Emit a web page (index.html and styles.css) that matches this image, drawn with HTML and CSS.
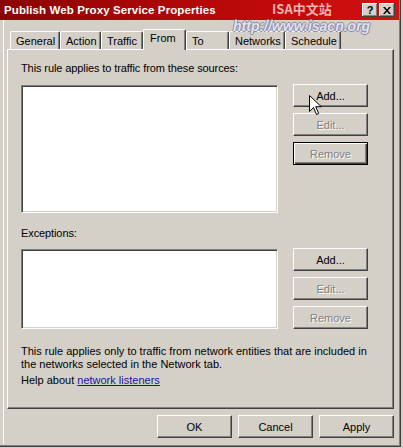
FILE: index.html
```html
<!DOCTYPE html>
<html lang="en">
<head>
    <meta charset="UTF-8">
    <title>Publish Web Proxy Service Properties</title>
    <link rel="stylesheet" href="styles.css">
</head>
<body>
    <div class="window">
        <div class="titlebar">
            <span class="title">Publish Web Proxy Service Properties</span>
            <div class="caption-buttons">
                <span class="cap-btn help">?</span>
                <span class="cap-btn close">
                    <svg width="8" height="7" viewBox="0 0 8 7">
                        <path d="M0 0h2l2 2.5 2-2.5h2l-3 3.5 3 3.5h-2l-2-2.5-2 2.5h-2l3-3.5z" fill="#000"/>
                    </svg>
                </span>
            </div>
        </div>

        <div class="client">
            <div class="tabs">
                <div class="tab w-general">General</div>
                <div class="tab w-action">Action</div>
                <div class="tab w-traffic">Traffic</div>
                <div class="tab w-from active">From</div>
                <div class="tab w-to">To</div>
                <div class="tab w-networks">Networks</div>
                <div class="tab w-schedule">Schedule</div>
            </div>

            <div class="panel">
                <p class="label">This rule applies to traffic from these sources:</p>
                <div class="row">
                    <div class="listbox sources"></div>
                    <div class="btn-col">
                        <button class="btn">Add...</button>
                        <button class="btn" disabled>Edit...</button>
                        <button class="btn focused" disabled>Remove</button>
                    </div>
                </div>

                <p class="label exceptions-label">Exceptions:</p>
                <div class="row">
                    <div class="listbox exceptions"></div>
                    <div class="btn-col">
                        <button class="btn">Add...</button>
                        <button class="btn" disabled>Edit...</button>
                        <button class="btn" disabled>Remove</button>
                    </div>
                </div>

                <p class="note">This rule applies only to traffic from network entities that are included in the networks selected in the Network tab.</p>
                <p class="help-line">Help about <a href="#">network listeners</a></p>
            </div>

            <div class="footer">
                <button class="btn">OK</button>
                <button class="btn">Cancel</button>
                <button class="btn">Apply</button>
            </div>
        </div>

        <div class="stamp-cn">ISA中文站</div>
        <div class="stamp-url">http://www.isacn.org</div>

        <svg class="cursor" width="13" height="21" viewBox="0 0 13 21">
            <path d="M0.5 0.5v16l4-4 3 7 2.2-1-3-6.8h5.6z" fill="#fff" stroke="#000" stroke-width="1"/>
        </svg>
    </div>
</body>
</html>
```

FILE: styles.css
```css
* {
    box-sizing: border-box;
}
body {
    margin: 0;
    background: #d4d0c8;
    font-family: "Liberation Sans", Arial, sans-serif;
    font-size: 11px;
    color: #000;
}
.window {
    position: relative;
    width: 401px;
    height: 447px;
    background: #d4d0c8;
    border-right: 1px solid #404040;
    border-bottom: 1px solid #404040;
    box-shadow: inset -1px -1px 0 #808080;
}
.window::before {
    content: "";
    position: absolute;
    left: 3px;
    top: 20px;
    bottom: 2px;
    width: 1px;
    background: #fff;
}

/* caption */
.titlebar {
    height: 20px;
    margin-right: 1px;
    display: flex;
    align-items: center;
    padding: 0 4px 0 4px;
    background: linear-gradient(to right, #8a0404, #b80808 55%, #d41010);
    color: #fff;
}
.title {
    font-weight: bold;
    font-size: 11.5px;
    letter-spacing: 0.1px;
}
.caption-buttons {
    margin-left: auto;
    display: flex;
    gap: 1px;
}
.cap-btn {
    width: 16px;
    height: 14px;
    display: flex;
    align-items: center;
    justify-content: center;
    background: #d4d0c8;
    box-shadow: inset -1px -1px 0 #404040, inset 1px 1px 0 #fff, inset -2px -2px 0 #808080;
    color: #000;
    font-weight: bold;
    font-size: 11px;
}

/* tabs */
.client {
    padding: 9px 6px 0 7px;
}
.tabs {
    display: flex;
    align-items: flex-end;
    height: 20px;
    padding-left: 3px;
}
.tab {
    position: relative;
    height: 18px;
    padding: 3px 0 0 5px;
    background: #d4d0c8;
    border-top: 1px solid #fff;
    border-left: 1px solid #fff;
    border-right: 1px solid #404040;
    border-radius: 2px 2px 0 0;
    box-shadow: inset -1px 0 0 #808080;
}
.tab.active {
    height: 21px;
    margin-bottom: -1px;
    padding: 2px 0 0 6px;
    z-index: 1;
}
.w-general { width: 50px; }
.w-action { width: 41px; }
.w-traffic { width: 42px; }
.w-from { width: 43px; }
.w-to { width: 43px; }
.w-networks { width: 56px; }
.w-schedule { width: 56px; }

/* page body */
.panel {
    height: 360px;
    padding: 12px 0 0 13px;
    border: 1px solid;
    border-color: #fff #404040 #404040 #fff;
    box-shadow: inset -1px -1px 0 #808080;
}
.label,
.note,
.help-line {
    margin: 0;
    line-height: 13px;
}
.label {
    letter-spacing: -0.1px;
}
.row {
    display: flex;
    gap: 15px;
    margin-top: 9px;
}
.exceptions-label {
    margin-top: 14px;
}
.exceptions-label + .row {
    margin-top: 8px;
}
.listbox {
    width: 257px;
    margin-top: 1px;
    background: #fff;
    border: 1px solid;
    border-color: #808080 #fff #fff #808080;
    box-shadow: inset 1px 1px 0 #404040, inset -1px -1px 0 #d4d0c8;
}
.sources {
    height: 128px;
}
.exceptions {
    height: 80px;
}
.btn-col {
    display: flex;
    flex-direction: column;
    gap: 6px;
}
.note {
    width: 360px;
    margin-top: 16px;
}
.help-line {
    margin-top: 3px;
}
.help-line a {
    color: #14149c;
}

/* push buttons */
.btn {
    width: 75px;
    height: 23px;
    padding: 0;
    font-family: inherit;
    font-size: 11px;
    color: #000;
    background: #d4d0c8;
    border: 1px solid;
    border-color: #fff #404040 #404040 #fff;
    border-radius: 0;
    box-shadow: inset -1px -1px 0 #808080;
}
.btn:disabled {
    color: #808080;
    text-shadow: 1px 1px 0 #fff;
}
.btn.focused {
    border-color: #000;
    box-shadow: inset 1px 1px 0 #fff, inset -1px -1px 0 #404040, inset -2px -2px 0 #808080;
}
.footer {
    display: flex;
    justify-content: flex-end;
    gap: 6px;
    margin-top: 6px;
}

/* overlays */
.stamp-cn {
    position: absolute;
    left: 272px;
    top: 1px;
    font-family: "Noto Sans CJK SC", sans-serif;
    font-weight: bold;
    font-size: 13px;
    line-height: 16px;
    color: rgba(255, 210, 210, 0.85);
}
.stamp-url {
    position: absolute;
    left: 233px;
    top: 18px;
    font-family: "Liberation Sans", Arial, sans-serif;
    font-weight: bold;
    font-style: italic;
    font-size: 14px;
    line-height: 16px;
    color: #e2e2ee;
    text-shadow: 1px 0 0 #8a8aa8, -1px 0 0 #8a8aa8, 0 1px 0 #8a8aa8, 0 -1px 0 #8a8aa8;
}
.cursor {
    position: absolute;
    left: 309px;
    top: 95px;
}
```
